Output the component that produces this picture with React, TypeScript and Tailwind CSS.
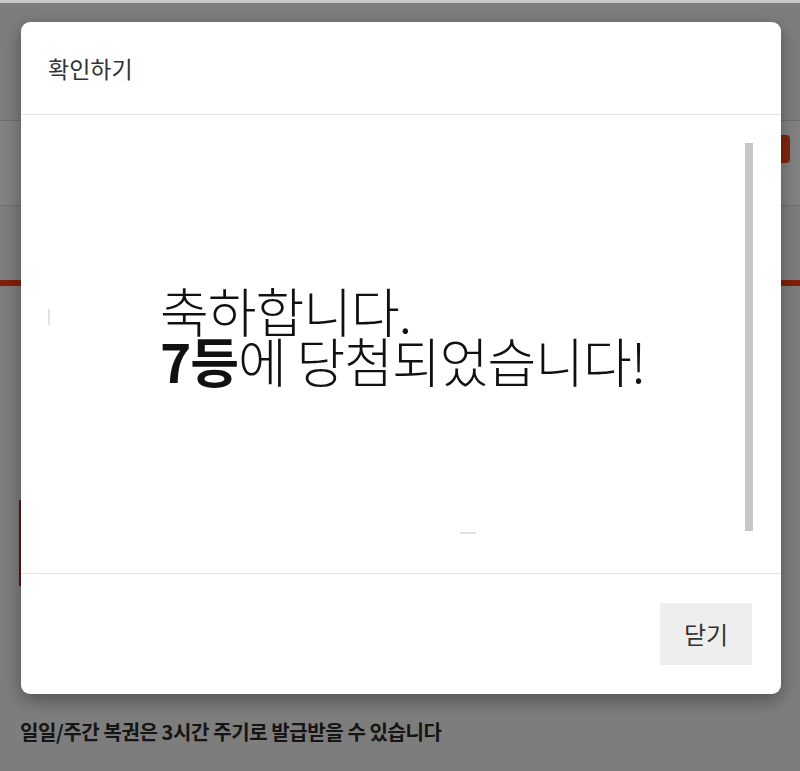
import React from 'react';

const KR = "font-['Noto_Sans_CJK_KR','Noto_Sans',sans-serif]";

// page that sits behind the dialog
const LotteryPage: React.FC = () => (
  <div className={`w-[800px] h-[771px] bg-[#f6f6f6] flex flex-col ${KR}`}>
    <div className="h-[120px]" />
    <div className="h-[86px] bg-white border-y border-[#d8d8d8] flex items-start justify-end pt-[14px] pr-[10px]">
      <span className="w-[16px] h-[28px] rounded-[4px] bg-[#ff4a1c]" />
    </div>
    <div className="h-[74px]" />
    <div className="h-[6px] bg-[#ff3d14]" />
    <div className="h-[214px]" />
    <div className="mx-[19px] h-[86px] bg-[#c0262b]" />
    <div className="h-[134px]" />
    <p className="px-[20px] text-[20px] leading-[24px] font-bold tracking-[-0.4px] text-[#2a2a2a]">
      일일/주간 복권은 3시간 주기로 발급받을 수 있습니다
    </p>
  </div>
);

const ResultDialog: React.FC = () => (
  <div className={`absolute left-[21px] top-[22px] w-[760px] h-[672px] bg-white rounded-[9px] shadow-[0_6px_18px_rgba(0,0,0,0.35)] flex flex-col overflow-hidden ${KR}`}>
    <div className="h-[93px] flex items-center px-[27px] border-b border-[#e4e4e4]">
      <h2 className="text-[23px] text-[#333]">확인하기</h2>
    </div>

    <div className="h-[458px] flex pt-[28px] pl-[27px] pr-[28px]">
      <div className="w-[112px] pt-[166px]">
        <div className="w-[2px] h-[16px] bg-[#e2e2e2]" />
      </div>
      <div className="flex-1 flex flex-col pt-[142px] text-[53px] leading-[50px] font-light text-[#111] tracking-[-1px]">
        <span>축하합니다.</span>
        <span>
          <b className="font-bold">7등</b>에 당첨되었습니다!
        </span>
        <div className="mt-[147px] ml-[300px] w-[16px] h-[2px] bg-[#e0e0e0]" />
      </div>
      <div className="w-[8px] h-[388px] bg-[#c6c6c6]" />
    </div>

    <div className="flex-1 border-t border-[#e4e4e4] flex justify-end items-start pt-[29px] pr-[29px]">
      <button className="w-[92px] h-[62px] bg-[#eeeeee] text-[24px] text-[#333]">닫기</button>
    </div>
  </div>
);

export default function App() {
  return (
    <div className="relative w-[800px] h-[771px] overflow-hidden">
      <LotteryPage />
      <div className="absolute inset-x-0 top-[3px] bottom-0 bg-black/[0.49]" />
      <div className="absolute inset-x-0 top-0 h-[3px] bg-[#c9c9c9]" />
      <ResultDialog />
    </div>
  );
}
